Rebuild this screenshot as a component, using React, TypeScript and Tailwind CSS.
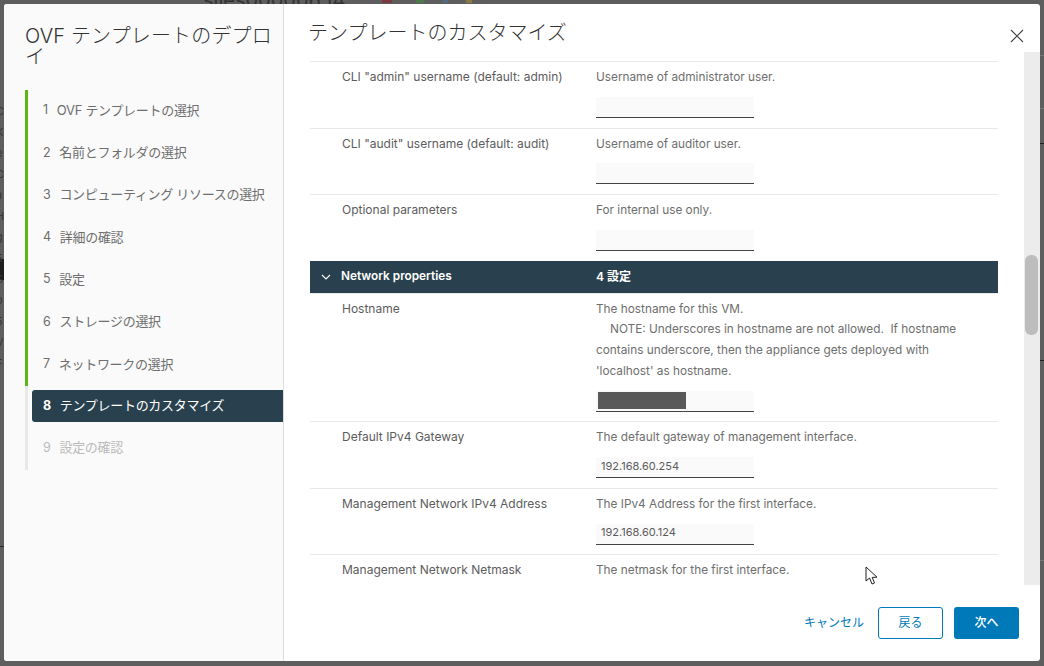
import React from "react";

const FONT = "font-['Inter','Noto_Sans_CJK_JP','Noto_Sans',sans-serif]";

const steps = [
  "OVF テンプレートの選択",
  "名前とフォルダの選択",
  "コンピューティング リソースの選択",
  "詳細の確認",
  "設定",
  "ストレージの選択",
  "ネットワークの選択",
];

const edgeLetters = ["C", "K", "e", "C", "a", "H", "g", "5", "S", "o", "5", "V", "F"];

function Row({ label, desc, value, tight }: { label: string; desc: React.ReactNode; value?: React.ReactNode; tight?: boolean }) {
  return (
    <div className={`flex border-t border-[#e8e8e8] pt-[5px] pl-[32px] ${tight ? "pb-[9.7px]" : "pb-[9.9px]"}`}>
      <div className="w-[254px] shrink-0 text-[12px] leading-[20.7px] text-[#5c5c5c]">{label}</div>
      <div className="w-[400px] text-[11.8px] leading-[20.7px] text-[#6e6e6e]">
        <div>{desc}</div>
        <div className="mt-[9px] flex h-[21px] w-[158px] items-center border-b border-[#444444] bg-[#fafafa] pb-[2px] pl-[5px] text-[11px] text-[#5c5c5c]">
          {value}
        </div>
      </div>
    </div>
  );
}

export default function App() {
  return (
    <div className={`relative h-[666px] w-[1044px] overflow-hidden bg-[#5e5e5e] pt-[4px] pr-[4px] pb-[5px] pl-[4px] ${FONT}`}>
      {/* dimmed page behind the dialog */}
      <div className="absolute left-[203px] top-[-15px] whitespace-nowrap text-[20px] text-[#333333]">siles000006.14</div>
      <div className="absolute left-[382px] top-0 h-[3px] w-[10px] bg-[#7a3a40]" />
      <div className="absolute left-[416px] top-0 h-[3px] w-[8px] bg-[#4c7a4c]" />
      <div className="absolute left-[442px] top-0 h-[3px] w-[6px] bg-[#56687a]" />
      <div className="absolute left-[466px] top-0 h-[3px] w-[6px] bg-[#8a7a40]" />
      <div className="absolute left-0 top-[259px] h-[21px] w-[4px] bg-[#1c1c1c]" />
      <div className="absolute left-[-4px] top-[101px] flex flex-col text-[11px] leading-[21px] text-[#383838]">
        {edgeLetters.map((c, i) => (
          <span key={i}>{c}</span>
        ))}
      </div>
      <div className="absolute left-0 top-[546px] h-px w-[4px] bg-[#2a2a2a]" />
      <div className="absolute right-0 top-[143px] h-px w-[4px] bg-[#222222]" />
      <div className="absolute right-0 top-[360px] h-px w-[4px] bg-[#222222]" />
      <div className="absolute right-0 top-[55px] h-px w-[4px] bg-[#777777]" />
      <div className="absolute right-0 top-[108px] h-px w-[4px] bg-[#777777]" />
      <div className="absolute right-0 top-[560px] h-px w-[4px] bg-[#777777]" />

      <div className="relative flex h-full w-full overflow-hidden rounded-[3px] bg-white">
        {/* left panel */}
        <div className="h-full w-[280px] shrink-0 border-r border-[#dddddd] bg-[#fafafa] pt-[22px] pl-[21px]">
          <div className="w-[250px] text-[20px] font-light leading-[21px] tracking-[0.15px] text-[#333333]">OVF テンプレートのデプロイ</div>
          <div className="mt-[21.5px] flex flex-col">
            <div className="border-l-[3px] border-[#60b515]">
              {steps.map((s, i) => (
                <div key={s} className="flex h-[42.3px] items-center gap-[9px] pl-[15px] text-[13px] tracking-[-0.3px] text-[#6e6e6e]">
                  <span className="text-[12.5px]">{i + 1}</span>
                  <span>{s}</span>
                </div>
              ))}
            </div>
            <div className="border-l-[3px] border-[#e8e8e8] pt-[4.5px]">
              <div className="ml-[4px] flex h-[32px] items-center gap-[9px] rounded-l-[3px] bg-[#29414e] pl-[11px] text-[13px] tracking-[-0.3px] text-white">
                <span className="text-[12.5px] font-bold">8</span>
                <span>テンプレートのカスタマイズ</span>
              </div>
              <div className="flex h-[48px] items-center gap-[9px] pl-[15px] pt-[4px] text-[13px] tracking-[-0.3px] text-[#bbbbbb]">
                <span className="text-[12.5px]">9</span>
                <span>設定の確認</span>
              </div>
            </div>
          </div>
        </div>

        {/* right panel */}
        <div className="relative flex h-full min-w-0 flex-1 flex-col">
          <div className="flex h-[48px] shrink-0 pl-[24px] pt-[14px]">
            <div className="text-[20px] font-light leading-[30px] text-[#333333]">テンプレートのカスタマイズ</div>
          </div>
          <svg className="absolute right-[16px] top-[25px]" width="14" height="14" viewBox="0 0 14 14" fill="none" stroke="#444444" strokeWidth="1.1">
            <path d="M1 1 L13 13 M13 1 L1 13" />
          </svg>

          <div className="flex h-[533px] shrink-0">
            <div className="h-full min-w-0 flex-1 overflow-hidden pt-[9px] pl-[26px]">
              <div className="w-[688px]">
                <Row label={'CLI "admin" username (default: admin)'} desc="Username of administrator user." />
                <Row label={'CLI "audit" username (default: audit)'} desc="Username of auditor user." />
                <Row label="Optional parameters" desc="For internal use only." />
                <div className="flex h-[32px] items-center bg-[#29414e] text-white">
                  <svg className="ml-[11px] shrink-0" width="10" height="10" viewBox="0 0 10 10" fill="none" stroke="#ffffff" strokeWidth="1.1">
                    <path d="M1 3 L5 7 L9 3" />
                  </svg>
                  <div className="ml-[10px] w-[255px] text-[11.8px] font-semibold">Network properties</div>
                  <div className="text-[12px] font-semibold">4 設定</div>
                </div>
                <Row
                  label="Hostname"
                  desc={
                    <>
                      The hostname for this VM.
                      <br />
                      <span className="pl-[14px]">NOTE: Underscores in hostname are not allowed.&nbsp; If hostname</span>
                      <br />
                      contains underscore, then the appliance gets deployed with
                      <br />
                      'localhost' as hostname.
                    </>
                  }
                  value={<div className="ml-[-3px] mt-[2px] h-[17px] w-[88px] shrink-0 bg-[#595959]" />}
                />
                <Row tight label="Default IPv4 Gateway" desc="The default gateway of management interface." value="192.168.60.254" />
                <Row tight label="Management Network IPv4 Address" desc="The IPv4 Address for the first interface." value="192.168.60.124" />
                <Row tight label="Management Network Netmask" desc="The netmask for the first interface." />
              </div>
            </div>
            <div className="relative h-full w-[16px] shrink-0 bg-[#ececec] pt-[203px] pl-[1px]">
              <div className="h-[80px] w-[13px] rounded-[6px] bg-[#bdbdbd]" />
            </div>
          </div>

          <div className="flex flex-1 items-start justify-end gap-[11px] pr-[21px] pt-[22px]">
            <div className="mr-[3px] flex h-[32px] items-center text-[12px] text-[#0079b8]">キャンセル</div>
            <div className="flex h-[32px] w-[65px] items-center justify-center rounded-[3px] border border-[#0079b8] bg-white text-[12px] text-[#0079b8]">戻る</div>
            <div className="flex h-[32px] w-[65px] items-center justify-center rounded-[3px] bg-[#0079b8] text-[12px] font-medium text-white">次へ</div>
          </div>
        </div>

        {/* mouse pointer */}
        <svg className="absolute left-[861px] top-[562px]" width="14" height="20" viewBox="0 0 14 20" fill="#ffffff" stroke="#222222" strokeWidth="1">
          <path d="M1 1 L1 15 L4.6 12 L7 18 L9.5 17 L7.2 11.4 L12 11.2 Z" />
        </svg>
      </div>
    </div>
  );
}
